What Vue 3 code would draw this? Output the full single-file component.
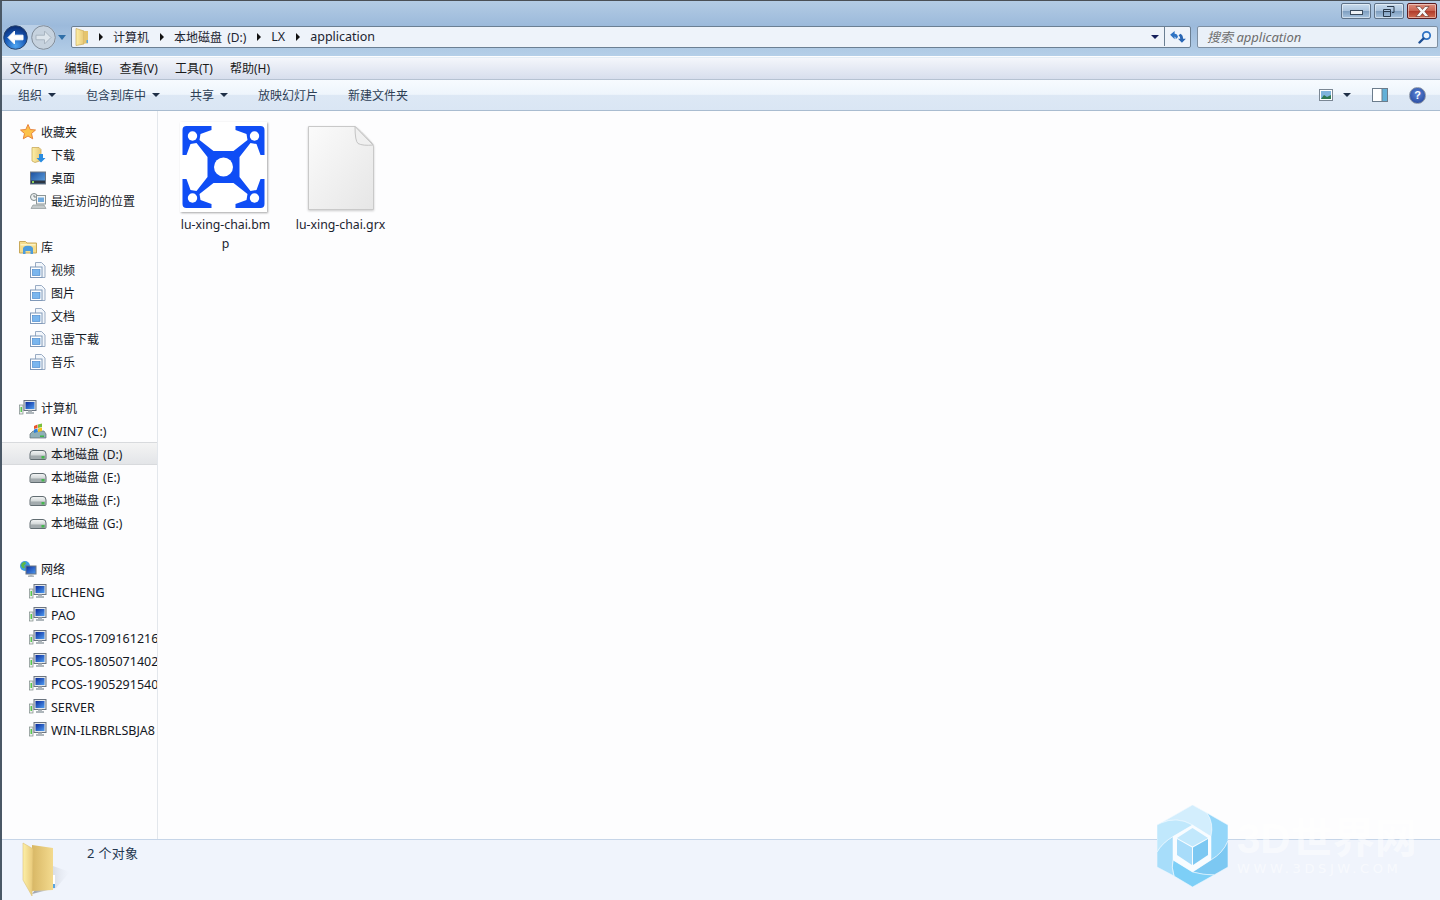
<template>
  <div class="win">
    <svg class="defs" width="0" height="0">
      <defs>
        <linearGradient id="folderG" x1="0" y1="0" x2="1" y2="0">
          <stop offset="0" stop-color="#fdf0a8" />
          <stop offset="1" stop-color="#e8c878" />
        </linearGradient>
        <linearGradient id="folderBack" x1="0" y1="0" x2="1" y2="0">
          <stop offset="0" stop-color="#d8b765" />
          <stop offset="1" stop-color="#f3da8e" />
        </linearGradient>
        <linearGradient id="shadowG" x1="0" y1="0" x2="1" y2="0">
          <stop offset="0" stop-color="#8f949c" stop-opacity=".9" />
          <stop offset="1" stop-color="#d8dde6" stop-opacity="0" />
        </linearGradient>
        <linearGradient id="screenG" x1="0" y1="0" x2="1" y2="1">
          <stop offset="0" stop-color="#0a2a9c" />
          <stop offset="1" stop-color="#4f9cf0" />
        </linearGradient>
        <linearGradient id="deskG" x1="0" y1="0" x2="1" y2="1">
          <stop offset="0" stop-color="#1c4f9e" />
          <stop offset="1" stop-color="#62a6e4" />
        </linearGradient>
        <linearGradient id="driveG" x1="0" y1="0" x2="0" y2="1">
          <stop offset="0" stop-color="#f4f6f6" />
          <stop offset="1" stop-color="#b4bcbe" />
        </linearGradient>
        <linearGradient id="pageG" x1="0" y1="0" x2="1" y2="1">
          <stop offset="0" stop-color="#fbfbfb" />
          <stop offset="1" stop-color="#e6e6e6" />
        </linearGradient>
        <radialGradient id="backG" cx=".5" cy=".85" r=".8">
          <stop offset="0" stop-color="#4fa6f2" />
          <stop offset=".6" stop-color="#1656b4" />
          <stop offset="1" stop-color="#0c3078" />
        </radialGradient>
        <symbol id="i-star" viewBox="0 0 18 16">
          <path d="M9 .5l2.200 5 5.300.5-4 3.500 1.200 5.300L9 12l-4.700 2.800 1.200-5.300-4-3.500 5.300-.5z" fill="#fcc24a" stroke="#e8823a" />
        </symbol>
        <symbol id="i-down" viewBox="0 0 18 16">
          <path d="M3 .5h7l2 2v11l-6 2-3-1.500z" fill="url(#folderG)" stroke="#c9a95a" stroke-width=".8" />
          <path d="M10 7h4v4h2.500L12 15.500 7.500 11H10z" fill="#2a8ce0" />
        </symbol>
        <symbol id="i-desk" viewBox="0 0 18 16">
          <rect x="1.500" y="2" width="15" height="12" fill="url(#deskG)" stroke="#6c7682" />
          <rect x="2" y="10.500" width="14" height="3" fill="#2d3642" />
          <rect x="3" y="11" width="2" height="2" fill="#8bd05a" />
        </symbol>
        <symbol id="i-recent" viewBox="0 0 18 16">
          <circle cx="5" cy="4" r="3.500" fill="#eef1f1" stroke="#7f8a8c" />
          <path d="M5 2v2h2" fill="none" stroke="#5f6a6c" stroke-width=".8" />
          <rect x="7.500" y="2.500" width="9" height="8.500" fill="#f4f6f6" stroke="#8c9596" />
          <rect x="9" y="4.500" width="6" height="4.500" fill="#6fa8dc" />
          <path d="M2 15.500l2-3.500h11l2 3.500z" fill="#c3c9ca" stroke="#8c9596" stroke-width=".7" />
        </symbol>
        <symbol id="i-lib" viewBox="0 0 18 16">
          <path d="M.5 14V2.500h6l1.500 1.500h9.500V14z" fill="#f5dd8c" stroke="#c9a95a" />
          <path d="M4 15V9.500a5 3 0 0 1 10 0V15h-2.500v-3h-5v3z" fill="#4d9cdc" />
          <rect x="1.500" y="5" width="15" height="1.500" fill="#fdf3c4" />
        </symbol>
        <symbol id="i-doc" viewBox="0 0 18 16">
          <path d="M6.500.5h6l3.500 3.500v11.500H6.500z" fill="#f2f6fb" stroke="#8fa3bd" stroke-width=".9" />
          <rect x="1.500" y="5" width="11.500" height="10.500" fill="#fff" stroke="#7f98b8" />
          <rect x="3.500" y="7.500" width="7.500" height="6" fill="#7ab6ee" stroke="#3f7fc6" stroke-width=".6" />
        </symbol>
        <symbol id="i-pc" viewBox="0 0 18 16">
          <rect x=".5" y="5" width="3.500" height="9" fill="#eef0ef" stroke="#7c8a86" stroke-width=".7" />
          <rect x="1.500" y="7" width="1.500" height="5" fill="#56c84e" />
          <rect x="5" y=".5" width="12" height="10" fill="#e3e7ea" stroke="#6b7480" />
          <rect x="6.500" y="2" width="9" height="7" fill="url(#screenG)" />
          <path d="M9 10.500h4V12h2v2H7v-2h2z" fill="#aeb6bb" />
        </symbol>
        <symbol id="i-win7" viewBox="0 0 18 16">
          <path d="M1 11l3-3h11l2 3v4H1z" fill="#8fb0b8" stroke="#5f6d74" stroke-width=".7" />
          <rect x="11" y="12.500" width="4" height="1.500" fill="#3fb54a" />
          <path d="M5 3l3.500-1.500V5L5 6z" fill="#e8552a" />
          <path d="M9 1.500 13 .5V4L9 5z" fill="#7cc03c" />
          <path d="M5 6.500l3.500-1V9L5 10z" fill="#2f80d8" />
          <path d="M9 5.500l4-1V8L9 9z" fill="#f4c21e" />
        </symbol>
        <symbol id="i-drive" viewBox="0 -3 18 16">
          <path d="M1 5Q1 1.500 4 1.500h10Q17 1.500 17 5v4.500q0 1-1 1H2q-1 0-1-1z" fill="url(#driveG)" stroke="#626d72" />
          <rect x="2" y="6.500" width="14" height="3.500" fill="#a3abae" />
          <rect x="12.500" y="7" width="3" height="2.500" fill="#44b84e" />
        </symbol>
        <symbol id="i-net" viewBox="0 0 18 16">
          <circle cx="6" cy="5" r="5" fill="#3d9be0" />
          <path d="M3 2l3-1.500 1 2-2 2 1 2-2 1-2-3z" fill="#5cb848" />
          <rect x="7" y="5" width="10" height="8" fill="url(#screenG)" stroke="#6b7480" />
          <path d="M10.500 13h3v1.500H15V16H9v-1.500h1.500z" fill="#aeb6bb" />
        </symbol>
      </defs>
    </svg>

    <header class="chrome">
      <div class="caption">
        <button class="cap-btn">
          <span class="min-glyph"></span>
        </button>
        <button class="cap-btn">
          <svg width="12" height="11" viewBox="0 0 12 11">
            <path d="M4 .5h7v6H9M.5 3.500h7v7h-7zM.5 5.500h7" fill="none" stroke="#2a3a4c" />
          </svg>
        </button>
        <button class="cap-btn close">
          <svg width="15" height="11" viewBox="0 0 15 11">
            <path d="M1 .5h4L7.500 3.500 10 .5h4L9.800 5.500 14 10.500h-4L7.500 7.500 5 10.500H1l4.200-5z" fill="#f6f6f6" stroke="#5a2a22" stroke-width=".6" />
          </svg>
        </button>
      </div>
      <div class="navrow">
        <div class="navpill">
          <div class="pair">
            <svg class="round" width="25" height="25" viewBox="0 0 25 25">
              <circle cx="12.500" cy="12.500" r="11.800" fill="url(#backG)" stroke="#27446e" />
              <path d="M5 12.500 11.500 6v4.200h8.500v4.600h-8.500V19z" fill="#fff" stroke="#fff" stroke-linejoin="round" />
            </svg>
            <svg class="round" width="25" height="25" viewBox="0 0 25 25">
              <circle cx="12.500" cy="12.500" r="11.800" fill="#c6d2de" stroke="#808c99" />
              <path d="M20 12.500 13.500 6v4.200H5v4.600h8.500V19z" fill="#dde5ec" stroke="#a9b5c1" stroke-linejoin="round" />
            </svg>
          </div>
          <span class="hist-caret"></span>
        </div>
        <div class="addr">
          <svg class="addr-folder" width="14" height="18" viewBox="0 0 14 18">
            <path d="M1 .5 9 3v13l-8 1.500z" fill="url(#folderG)" stroke="#c9a95a" stroke-width=".7" />
            <path d="M9 3h4v12.500H9z" fill="#e5c46e" />
            <rect x="11.500" y="12" width="1.500" height="3" fill="#5aa5e0" />
          </svg>
          <template v-for="c in crumbs" :key="c">
            <span class="crumb-arrow"></span>
            <span class="crumb" :class="{ latin: isLatin(c) }">{{ c }}</span>
          </template>
          <span class="grow"></span>
          <span class="addr-caret"></span>
          <span class="refresh">
            <svg width="18" height="17" viewBox="0 0 16 15">
              <path d="M1 6l4-3.500V5q2.500 0 3 3l-2 2Q6 7.500 5 7.500V10z" fill="#2f73c4" />
              <path d="M15 9.500 11.500 13 8 9.500h2Q10 7 8.500 6.500L10 5q2.500 1 2.500 4.500z" fill="#2a66b4" />
            </svg>
          </span>
        </div>
        <div class="search">
          <span class="search-text">搜索 application</span>
          <svg width="14" height="14" viewBox="0 0 14 14">
            <circle cx="8.500" cy="5.500" r="3.700" fill="#eaf3fb" stroke="#2f73c4" stroke-width="1.800" />
            <path d="M5.500 8.500 1.500 12.500" stroke="#1d4f94" stroke-width="2.400" stroke-linecap="round" />
          </svg>
        </div>
      </div>
    </header>

    <nav class="menubar">
      <span v-for="m in menus" :key="m">{{ m }}</span>
    </nav>

    <div class="toolbar">
      <span v-for="t in tools" :key="t.label" class="tool">
        {{ t.label }}<i v-if="t.caret" class="caret"></i>
      </span>
      <span class="grow"></span>
      <svg class="view-ic" width="14" height="12" viewBox="0 0 14 12">
        <rect x=".5" y=".5" width="13" height="11" fill="#fff" stroke="#7b8794" />
        <rect x="2" y="2" width="10" height="8" fill="#7fb4dc" />
        <path d="M2 10l3-4 3 2 4-2v4z" fill="#2f7a52" />
      </svg>
      <i class="caret view-caret"></i>
      <svg class="pane-ic" width="16" height="14" viewBox="0 0 16 14">
        <rect x=".5" y=".5" width="15" height="13" fill="#fff" stroke="#6b7c8c" />
        <rect x="10" y="1" width="5" height="12" fill="#62b0d8" />
        <path d="M10 .5v13" stroke="#6b7c8c" />
      </svg>
      <span class="help">?</span>
    </div>

    <main class="body">
      <aside class="side">
        <div
          v-for="(row, i) in sideRows"
          :key="i"
          class="row"
          :class="{ sub: row.sub, sel: row.sel }"
        >
          <template v-if="row.label">
            <svg class="row-ic" width="18" height="16">
              <use :href="'#i-' + row.icon" />
            </svg>
            <span class="row-label" :class="{ latin: isLatin(row.label) }">{{ row.label }}</span>
          </template>
        </div>
      </aside>

      <section class="files">
        <div class="tile">
          <div class="thumb">
            <svg width="85" height="86" viewBox="-42.500 -43 85 86">
              <path
                fill="#0f4df5"
                d="M-37 -41H-12V-37L-23 -33L-24 -27L-10 -16H10L24 -27L23 -33L12 -37V-41H37Q41 -41 41 -37V-12H37L33 -23L27 -24L16 -10V10L27 24L33 23L37 12H41V37Q41 41 37 41H12V37L23 33L24 27L10 16H-10L-24 27L-23 33L-12 37V41H-37Q-41 41 -41 37V12H-37L-33 23L-27 24L-16 10V-10L-27 -24L-33 -23L-37 -12H-41V-37Q-41 -41 -37 -41Z"
              />
              <circle r="9.500" fill="#fff" />
              <circle cx="-31" cy="-31" r="4.700" fill="#fff" />
              <circle cx="31" cy="-31" r="4.700" fill="#fff" />
              <circle cx="-31" cy="31" r="4.700" fill="#fff" />
              <circle cx="31" cy="31" r="4.700" fill="#fff" />
            </svg>
          </div>
          <div class="name">lu-xing-chai.bmp</div>
        </div>
        <div class="tile">
          <svg class="page" width="66" height="86" viewBox="0 0 66 86">
            <path d="M.5 1.500H47Q50 3 64.500 18.500 65.500 20 65.500 22v62.500H.5z" fill="url(#pageG)" stroke="#c9c9c9" />
            <path d="M47 1.500Q47 16 50 18.500 55 21 65 20z" fill="#f0f0f0" stroke="#c4c4c4" />
          </svg>
          <div class="name">lu-xing-chai.grx</div>
        </div>
      </section>
    </main>

    <footer class="status">
      <svg class="status-folder" width="52" height="56" viewBox="0 0 52 56">
        <path d="M31 24 48 30 34 46 10 52z" fill="url(#shadowG)" />
        <path d="M10 3 31 6V48L10 49z" fill="url(#folderBack)" />
        <path d="M1 1 10.500 6.500q.5.500.5 1.500L10 54 1 38z" fill="url(#folderG)" stroke="#dcc176" stroke-width=".6" />
        <rect x="31" y="33" width="2" height="13" fill="#fff" />
        <rect x="31" y="42" width="2" height="4" fill="#5aa5e0" />
      </svg>
      <span class="count">2 个对象</span>
    </footer>

    <div class="mark">
      <svg width="71" height="82" viewBox="0 0 71 82">
        <g stroke="#eef8ff" stroke-width=".6">
          <path d="M4 18 35.500 0 50 8Q57 18 54 31.500L35.500 20Q20 11 4 18Z" fill="#d3eefd" />
          <path d="M50 8 71 20V36Q66 48 54 55V31.500Q57 18 50 8Z" fill="#94d6f9" />
          <path d="M71 36V62L57 70Q46 70 35.500 67L54 55Q66 48 71 36Z" fill="#7cc8f2" />
          <path d="M57 70 35.500 82 17 71Q14 62 16 55L35.500 67Q46 70 57 70Z" fill="#7dcff7" />
          <path d="M17 71 0 62V47Q5 38 16 31.500V55Q14 62 17 71Z" fill="#a7ddfa" />
          <path d="M0 47V20L4 18Q20 11 35.500 20L16 31.500Q5 38 0 47Z" fill="#c0e8fc" />
        </g>
        <path d="M35.500 20 54 31.500V55L35.500 67 16 55V31.500Z" fill="#f8fcff" />
        <path d="M35.500 23 51 33 35.500 41.500 20 33Z" fill="#c2e8fc" />
        <path d="M20 34 35 42.500V60L20 50Z" fill="#a8dcfa" />
        <path d="M51 34 36 42.500V60L51 50Z" fill="#7cc8f2" />
      </svg>
      <div class="mark-text">
        <div class="mark-big">3D世界网</div>
        <div class="mark-small">WWW.3DSJW.COM</div>
      </div>
    </div>
  </div>
</template>

<script setup>
const crumbs = ['计算机', '本地磁盘 (D:)', 'LX', 'application']
const menus = ['文件(F)', '编辑(E)', '查看(V)', '工具(T)', '帮助(H)']
const tools = [
  { label: '组织', caret: true },
  { label: '包含到库中', caret: true },
  { label: '共享', caret: true },
  { label: '放映幻灯片' },
  { label: '新建文件夹' }
]

const sideRows = [
  { label: '收藏夹', icon: 'star' },
  { label: '下载', icon: 'down', sub: true },
  { label: '桌面', icon: 'desk', sub: true },
  { label: '最近访问的位置', icon: 'recent', sub: true },
  {},
  { label: '库', icon: 'lib' },
  { label: '视频', icon: 'doc', sub: true },
  { label: '图片', icon: 'doc', sub: true },
  { label: '文档', icon: 'doc', sub: true },
  { label: '迅雷下载', icon: 'doc', sub: true },
  { label: '音乐', icon: 'doc', sub: true },
  {},
  { label: '计算机', icon: 'pc' },
  { label: 'WIN7 (C:)', icon: 'win7', sub: true },
  { label: '本地磁盘 (D:)', icon: 'drive', sub: true, sel: true },
  { label: '本地磁盘 (E:)', icon: 'drive', sub: true },
  { label: '本地磁盘 (F:)', icon: 'drive', sub: true },
  { label: '本地磁盘 (G:)', icon: 'drive', sub: true },
  {},
  { label: '网络', icon: 'net' },
  { label: 'LICHENG', icon: 'pc', sub: true },
  { label: 'PAO', icon: 'pc', sub: true },
  { label: 'PCOS-1709161216', icon: 'pc', sub: true },
  { label: 'PCOS-1805071402', icon: 'pc', sub: true },
  { label: 'PCOS-1905291540', icon: 'pc', sub: true },
  { label: 'SERVER', icon: 'pc', sub: true },
  { label: 'WIN-ILRBRLSBJA8', icon: 'pc', sub: true }
]

const isLatin = (s) => /^[\x00-\x7f]+$/.test(s)
</script>

<style>
html,
body {
  margin: 0;
  overflow: hidden;
}
</style>

<style scoped>
.win {
  position: relative;
  width: 1440px;
  height: 900px;
  box-sizing: border-box;
  display: flex;
  flex-direction: column;
  overflow: hidden;
  border-top: 1px solid #4a4f55;
  border-left: 2px solid #4a5866;
  background: #fdfdfe;
  font-family: "Noto Sans", "Noto Sans CJK SC", sans-serif;
  font-size: 12px;
  color: #1c2430;
}

.defs {
  position: absolute;
}

.grow {
  flex: 1;
}

.chrome {
  height: 55px;
  flex: none;
  display: flex;
  flex-direction: column;
  background: linear-gradient(#b3cbe4, #9cbadb 45%, #b5cfe8);
}

.caption {
  height: 23px;
  display: flex;
  justify-content: flex-end;
  gap: 3px;
  padding-right: 3px;
  box-sizing: border-box;
  padding-top: 2px;
}

.cap-btn {
  width: 30px;
  height: 16px;
  padding: 0;
  border: 1px solid #5e7288;
  border-radius: 2px;
  display: flex;
  align-items: center;
  justify-content: center;
  background: linear-gradient(#c9dcee, #a9c2dc 50%, #7f9fc0 52%, #a8c4df);
  box-shadow: inset 0 0 0 1px rgba(255, 255, 255, 0.45);
}

.cap-btn.close {
  border-color: #5c1c20;
  background: linear-gradient(#dc8d7d, #c9624f 50%, #b13c2c 52%, #cf6b50);
}

.min-glyph {
  display: block;
  width: 11px;
  height: 3px;
  background: #eef2f6;
  border: 1px solid #3a4a5c;
  margin-top: 3px;
}

.navrow {
  height: 30px;
  display: flex;
  align-items: flex-start;
}

.navpill {
  width: 69px;
  flex: none;
  height: 27px;
  display: flex;
  align-items: center;
  padding-left: 1px;
  box-sizing: border-box;
}

.pair {
  display: flex;
  gap: 3px;
  flex: none;
  border-radius: 13px;
  background: rgba(255, 255, 255, 0.3);
}

.round {
  display: block;
  flex: none;
}

.hist-caret {
  width: 0;
  height: 0;
  border-left: 4px solid transparent;
  border-right: 4px solid transparent;
  border-top: 5px solid #2f6fa8;
  margin-left: 2px;
}

.addr {
  width: 1120px;
  height: 22px;
  margin-top: 2px;
  flex: none;
  box-sizing: border-box;
  display: flex;
  align-items: center;
  background: #eef3fa;
  border: 1px solid #6b7f93;
  border-radius: 2px;
  padding: 0 0 1px 3px;
}

.crumb-arrow {
  width: 0;
  height: 0;
  border-top: 4px solid transparent;
  border-bottom: 4px solid transparent;
  border-left: 4px solid #111;
  margin: 0 10px;
}

.crumb {
  margin-right: 1px;
  white-space: nowrap;
  word-spacing: 2px;
}

.crumb.latin {
  font-size: 12.5px;
}

.addr-caret {
  width: 0;
  height: 0;
  border-left: 4px solid transparent;
  border-right: 4px solid transparent;
  border-top: 4px solid #16205c;
  margin-right: 5px;
}

.refresh {
  width: 25px;
  height: 100%;
  border-left: 1px solid #6b7f93;
  display: flex;
  align-items: center;
  justify-content: center;
}

.search {
  width: 241px;
  height: 22px;
  margin: 2px 0 0 6px;
  box-sizing: border-box;
  flex: none;
  display: flex;
  align-items: center;
  justify-content: space-between;
  padding: 0 5px 1px 9px;
  background: #eaf1f9;
  border: 1px solid #7d8fa2;
  border-radius: 2px;
}

.search-text {
  font-style: italic;
  font-size: 13px;
  color: #6d6d6d;
}

.menubar {
  flex: none;
  margin-top: 1px;
  display: flex;
  align-items: center;
  gap: 17.1px;
  padding: 0 0 2px 8px;
  height: 19px;
  background: linear-gradient(#f4f6fb, #d7deed);
  border-bottom: 1px solid #b6c2d2;
  border-top: 1px solid #e4edf6;
  color: #1a1a1a;
}

.toolbar {
  height: 30px;
  flex: none;
  display: flex;
  align-items: center;
  padding: 0 14px 0 16px;
  color: #2d3e55;
  background: linear-gradient(#f7fbff, #eef5fc 48%, #dde8f5 50%, #dae6f4);
  border-bottom: 1px solid #a9bcd0;
}

.tool {
  display: flex;
  align-items: center;
  margin-right: 30px;
}

.caret {
  display: block;
  width: 0;
  height: 0;
  margin-left: 6px;
  border-left: 4px solid transparent;
  border-right: 4px solid transparent;
  border-top: 4px solid #1f2f47;
}

.view-caret {
  margin: 0 21px 0 10px;
}

.pane-ic {
  margin-right: 21px;
}

.help {
  width: 15px;
  height: 15px;
  border-radius: 50%;
  background: radial-gradient(circle at 50% 40%, #5d86d8, #1d3f96);
  border: 1px solid #8a94a6;
  color: #fff;
  font-weight: 700;
  font-size: 11px;
  line-height: 15px;
  text-align: center;
  font-family: "Liberation Sans", sans-serif;
}

.body {
  flex: 1;
  display: flex;
  min-height: 0;
}

.side {
  width: 156px;
  flex: none;
  box-sizing: border-box;
  padding-top: 9px;
  border-right: 1px solid #e3e7ec;
  overflow: hidden;
}

.row {
  height: 23px;
  display: flex;
  align-items: center;
  padding-left: 17px;
  white-space: nowrap;
  box-sizing: border-box;
}

.row.sub {
  padding-left: 27px;
}

.row.sel {
  background: linear-gradient(#f4f4f4, #e3e5e8);
  border-top: 1px solid #d8dadd;
  border-bottom: 1px solid #d8dadd;
}

.row-ic {
  flex: none;
  margin-right: 4px;
}

.row-label {
  color: #14181f;
  word-spacing: 1px;
}

.row-label.latin {
  font-size: 12.5px;
  padding-top: 2px;
}

.files {
  flex: 1;
  display: flex;
  align-items: flex-start;
  padding: 11px 0 0 10px;
}

.tile {
  width: 115px;
  display: flex;
  flex-direction: column;
  align-items: center;
}

.thumb {
  width: 87px;
  height: 90px;
  box-sizing: border-box;
  padding: 2px 1px;
  margin-right: 4px;
  background: #fff;
  box-shadow: 1px 1px 2px rgba(0, 0, 0, 0.35);
}

.page {
  margin-top: 3px;
  filter: drop-shadow(0 1px 1px rgba(0, 0, 0, 0.2));
}

.name {
  width: 92px;
  margin-top: 3px;
  text-align: center;
  font-size: 12.3px;
  line-height: 19px;
  word-break: break-all;
}

.page + .name {
  margin-top: 4px;
}

.status {
  height: 61px;
  flex: none;
  box-sizing: border-box;
  display: flex;
  align-items: flex-start;
  padding: 2px 0 0 20px;
  background: #f0f4fc;
  border-top: 1px solid #c6d5e8;
}

.count {
  margin: 1px 0 0 13px;
  font-size: 13px;
  letter-spacing: 0.3px;
  color: #24374f;
}

.mark {
  position: absolute;
  left: 1155px;
  top: 804px;
  display: flex;
  gap: 9px;
  pointer-events: none;
}

.mark-text {
  margin-top: 12px;
  color: rgba(255, 255, 255, 0.55);
  font-family: "Liberation Sans", "Noto Sans CJK SC", sans-serif;
}

.mark-big {
  font-size: 42px;
  font-weight: 700;
  line-height: 44px;
  white-space: nowrap;
}

.mark-small {
  font-family: "DejaVu Sans", sans-serif;
  font-size: 13px;
  letter-spacing: 3.6px;
  line-height: 14px;
  margin-top: 1px;
  white-space: nowrap;
}
</style>
